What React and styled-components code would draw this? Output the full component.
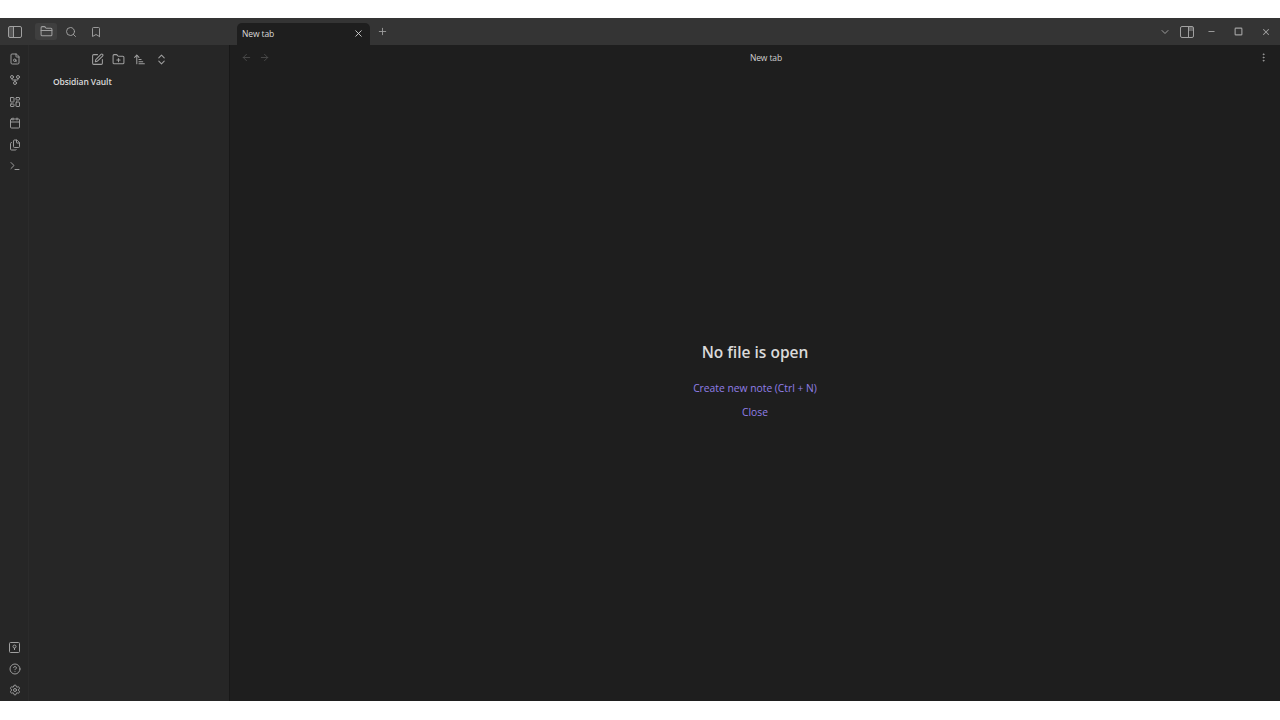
import React from 'react'
import styled, { createGlobalStyle } from 'styled-components'
import {
  ArrowLeft,
  ArrowRight,
  ArrowUpNarrowWide,
  Bookmark,
  Calendar,
  ChevronDown,
  ChevronsUpDown,
  CircleHelp,
  EllipsisVertical,
  FileSearch,
  Files,
  FolderClosed,
  FolderPlus,
  GitFork,
  LayoutDashboard,
  Minus,
  Plus,
  Search,
  Settings,
  Square,
  SquarePen,
  Terminal,
  X
} from 'lucide-react'

const GlobalStyle = createGlobalStyle`
  html, body {
    margin: 0;
    height: 100%;
    background: #fff;
  }
  body {
    font-family: "Open Sans", "Noto Sans", sans-serif;
    overflow: hidden;
  }
  #root {
    height: 100%;
  }
`

const Page = styled.div`
  height: 720px;
  padding: 18px 0 19px;
  box-sizing: border-box;
  display: flex;
  flex-direction: column;
`

const Window = styled.div`
  flex: 1;
  min-height: 0;
  display: flex;
  flex-direction: column;
  background: #1e1e1e;
`

const TitleBar = styled.div`
  height: 27px;
  flex: none;
  display: flex;
  align-items: flex-end;
  background: #343434;
`

const LeftTabs = styled.div`
  width: 237px;
  height: 100%;
  flex: none;
  display: flex;
  align-items: center;
`

const BarIcon = styled.div`
  width: ${p => p.$w || 20}px;
  height: ${p => p.$h || 20}px;
  margin-left: ${p => p.$gap || 0}px;
  flex: none;
  display: flex;
  align-items: center;
  justify-content: center;
  border-radius: 3px;
  color: ${p => p.$color || '#a0a0a0'};
  background: ${p => (p.$active ? '#3f3f3f' : 'transparent')};
`

const Tab = styled.div`
  width: 133px;
  height: 22px;
  flex: none;
  box-sizing: border-box;
  padding: 0 6px 2px 5px;
  display: flex;
  align-items: center;
  justify-content: space-between;
  background: #1e1e1e;
  border-radius: 5px 5px 0 0;
  color: #dadada;
  font-size: 8.5px;
  letter-spacing: -0.1px;
`

const Spacer = styled.div`
  flex: 1;
`

const TitleActions = styled.div`
  height: 100%;
  display: flex;
  align-items: center;
`

const Body = styled.div`
  flex: 1;
  min-height: 0;
  display: flex;
`

const Ribbon = styled.nav`
  width: 29px;
  flex: none;
  box-sizing: border-box;
  padding: 4px 0 1px 1px;
  display: flex;
  flex-direction: column;
  justify-content: space-between;
  align-items: center;
  background: #262626;
  border-right: 1px solid #2b2b2b;
`

const RibbonGroup = styled.div`
  display: flex;
  flex-direction: column;
  align-items: center;
  gap: 1.4px;
`

const Sidebar = styled.aside`
  width: 201px;
  flex: none;
  box-sizing: border-box;
  background: #262626;
  border-right: 1px solid #181818;
`

const SidebarTools = styled.div`
  height: 20px;
  margin-top: 4px;
  padding-left: 58px;
  display: flex;
  align-items: center;
  gap: 1.4px;
`

const VaultName = styled.div`
  margin: 6px 0 0 24px;
  color: #dadada;
  font-size: 8.5px;
  font-weight: 600;
  line-height: 14px;
  letter-spacing: -0.1px;
`

const Main = styled.main`
  flex: 1;
  min-width: 0;
  display: flex;
  flex-direction: column;
`

const ViewHeader = styled.div`
  height: 24px;
  flex: none;
  box-sizing: border-box;
  padding: 0 10px 0 7px;
  display: flex;
  align-items: center;
`

const NavButtons = styled.div`
  display: flex;
`

const ViewTitle = styled.div`
  flex: 1;
  padding-left: 3px;
  text-align: center;
  color: #d0d0d0;
  font-size: 8.5px;
  letter-spacing: -0.1px;
`

const Empty = styled.div`
  flex: 1;
  display: flex;
  flex-direction: column;
  align-items: center;
  padding-top: 272px;
`

const EmptyTitle = styled.h1`
  margin: 0 0 17px;
  color: #dadada;
  font-size: 15.5px;
  line-height: 22px;
  font-weight: 600;
`

const ActionLink = styled.a`
  color: #917fe8;
  font-size: 10.3px;
  line-height: 16px;
  margin-bottom: 8px;
  cursor: pointer;
`

const icon = (Glyph, size = 12, stroke = 1.9) => <Glyph size={size} strokeWidth={stroke} />

// Obsidian draws these three itself, lucide has no exact match
const SidebarLeftIcon = () => (
  <svg width="14" height="12" viewBox="0 0 14 12" fill="none" stroke="currentColor">
    <rect x="0.5" y="0.5" width="13" height="11" rx="1.5" />
    <path d="M5.5 0.5v11" />
    <path d="M1 1h4v10H1z" fill="currentColor" fillOpacity="0.3" stroke="none" />
  </svg>
)

const SidebarRightIcon = () => (
  <svg width="14" height="12" viewBox="0 0 14 12" fill="none" stroke="currentColor">
    <rect x="0.5" y="0.5" width="13" height="11" rx="1.5" />
    <path d="M8.5 0.5v11" />
    <path d="M9 1h4v4H9z" fill="currentColor" fillOpacity="0.45" stroke="none" />
  </svg>
)

const VaultIcon = () => (
  <svg width="11" height="11" viewBox="0 0 11 11" fill="none" stroke="currentColor">
    <rect x="0.5" y="0.5" width="10" height="10" rx="1" />
    <circle cx="5.5" cy="4.5" r="1.5" />
    <path d="M5.5 6v2" />
  </svg>
)

const ribbonTop = [FileSearch, GitFork, LayoutDashboard, Calendar, Files, Terminal]
const sidebarTools = [SquarePen, FolderPlus, ArrowUpNarrowWide, ChevronsUpDown]

export default function App() {
  return (
    <Page>
      <GlobalStyle />
      <Window>
        <TitleBar>
          <LeftTabs>
            <BarIcon $w={29}><SidebarLeftIcon /></BarIcon>
            <BarIcon $w={22} $h={17} $gap={6} $active>{icon(FolderClosed, 13)}</BarIcon>
            <BarIcon $w={28}>{icon(Search, 12)}</BarIcon>
            <BarIcon $w={22}>{icon(Bookmark, 12)}</BarIcon>
          </LeftTabs>
          <Tab>
            New tab
            {icon(X, 11)}
          </Tab>
          <TitleActions>
            <BarIcon $w={24}>{icon(Plus, 11)}</BarIcon>
          </TitleActions>
          <Spacer />
          <TitleActions>
            <BarIcon $w={22}>{icon(ChevronDown, 12)}</BarIcon>
            <BarIcon $w={22}><SidebarRightIcon /></BarIcon>
            <BarIcon $w={26}>{icon(Minus, 9, 2.5)}</BarIcon>
            <BarIcon $w={28}>{icon(Square, 9, 3)}</BarIcon>
            <BarIcon $w={28}>{icon(X, 10, 2.5)}</BarIcon>
          </TitleActions>
        </TitleBar>
        <Body>
          <Ribbon>
            <RibbonGroup>
              {ribbonTop.map((Glyph, i) => (
                <BarIcon key={i}>{icon(Glyph)}</BarIcon>
              ))}
            </RibbonGroup>
            <RibbonGroup>
              <BarIcon><VaultIcon /></BarIcon>
              <BarIcon>{icon(CircleHelp)}</BarIcon>
              <BarIcon>{icon(Settings)}</BarIcon>
            </RibbonGroup>
          </Ribbon>
          <Sidebar>
            <SidebarTools>
              {sidebarTools.map((Glyph, i) => (
                <BarIcon key={i}>{icon(Glyph, 13)}</BarIcon>
              ))}
            </SidebarTools>
            <VaultName>Obsidian Vault</VaultName>
          </Sidebar>
          <Main>
            <ViewHeader>
              <NavButtons>
                <BarIcon $w={18} $color="#4c4c4c">{icon(ArrowLeft, 11)}</BarIcon>
                <BarIcon $w={18} $color="#4c4c4c">{icon(ArrowRight, 11)}</BarIcon>
              </NavButtons>
              <ViewTitle>New tab</ViewTitle>
              <BarIcon $w={14}>{icon(EllipsisVertical, 11)}</BarIcon>
            </ViewHeader>
            <Empty>
              <EmptyTitle>No file is open</EmptyTitle>
              <ActionLink>Create new note (Ctrl + N)</ActionLink>
              <ActionLink>Close</ActionLink>
            </Empty>
          </Main>
        </Body>
      </Window>
    </Page>
  )
}
